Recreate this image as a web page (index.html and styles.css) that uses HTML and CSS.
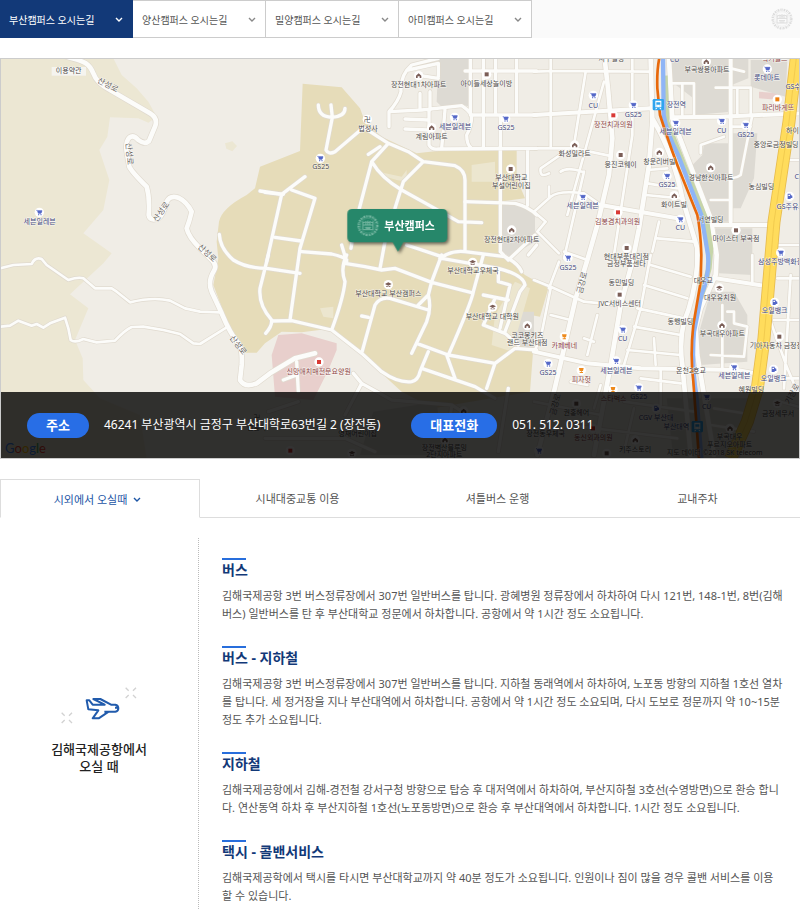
FILE: index.html
```html
<!DOCTYPE html>
<html lang="ko">
<head>
<meta charset="utf-8">
<meta name="viewport" content="width=device-width, initial-scale=1">
<title>부산캠퍼스 오시는길</title>
<link rel="stylesheet" href="styles.css">
</head>
<body>
<header class="topbar">
  <nav class="campus-nav">
    <a class="campus active" href="#">부산캠퍼스 오시는길 <svg class="chev" viewBox="0 0 8 6"><path d="M1 1l3 3 3-3"/></svg></a>
    <a class="campus" href="#">양산캠퍼스 오시는길 <svg class="chev" viewBox="0 0 8 6"><path d="M1 1l3 3 3-3"/></svg></a>
    <a class="campus" href="#">밀양캠퍼스 오시는길 <svg class="chev" viewBox="0 0 8 6"><path d="M1 1l3 3 3-3"/></svg></a>
    <a class="campus" href="#">아미캠퍼스 오시는길 <svg class="chev" viewBox="0 0 8 6"><path d="M1 1l3 3 3-3"/></svg></a>
  </nav>
  <svg class="emblem" viewBox="0 0 66 66"><use href="#seal"/></svg>
</header>

<main>
<section class="map">
<svg class="map-canvas" viewBox="3 12 2394 1197" preserveAspectRatio="xMidYMid slice">
<defs>
  <g id="seal" fill="none" stroke="currentColor">
    <circle cx="33" cy="33" r="28" stroke-width="7" stroke-dasharray="4 2 2 2 5 3"/>
    <circle cx="33" cy="33" r="22" stroke-width="1"/>
    <path stroke-width="3" d="M18 20v25h30V20M18 25l9-4 6 4 6-4 9 4M18 31h30M24 38h18M26 42h14M33 18v13M27 21v10M39 21v10"/>
  </g>
  <g id="cart"><circle r="14" fill="#fff"/><path d="M-9-6h3l3 9h8l3-8H-4M-4-3H7M-3 0H6" fill="#5568c8" stroke="#5568c8" stroke-width="2"/><circle cx="-2" cy="7" r="2" fill="#5568c8"/><circle cx="5" cy="7" r="2" fill="#5568c8"/></g>
  <g id="home"><circle r="14" fill="#fff"/><path d="M-8 0l8-7 8 7v7H3V2h-6v5h-5z" fill="#7b5e57"/></g>
  <g id="sq"><circle r="14" fill="#fff"/><path d="M-6-6H6V6H-6z" fill="#7b5e57"/></g>
  <g id="red"><circle r="14" fill="#fff"/><path d="M-6-6H6V6H-6z" fill="#d93a36"/></g>
  <g id="school"><circle r="14" fill="#fff"/><path d="M-10-2l10-5 10 5-10 5zM-6 3v4H6V3L0 6z" fill="#7b5e57"/></g>
  <g id="food"><circle r="14" fill="#fff"/><path d="M-7-7H7L5 2H1v3h4v3H-5V5h4V2h-4z" fill="#ee8a1c"/></g>
  <g id="gas"><circle r="14" fill="#fff"/><path d="M-6-8H3V8H-6zM3-4l5 2v7H3M-4-5v4H1v-4z" fill="#5568c8" fill-rule="evenodd"/></g>
  <g id="train"><rect x="-17" y="-17" width="34" height="34" rx="4" fill="#2fa4ee"/><path fill="#fff" fill-rule="evenodd" d="M-9-12H9V8H-9zM-6-7H6v7H-6zM-6 3v2h3V3zM3 3v2h3V3zM-7 10h4l-3 4h-4zM7 10H3l3 4h4z"/></g>
  <g id="roads">
    <g>
      <path class="r14" d="M200 5C250 20 265 20 280 55Q290 85 330 105L450 175Q475 190 465 215L447 258Q435 270 415 255Q400 238 388 248Q376 260 380 290L388 335Q395 350 440 395Q450 430 446 480Q450 500 475 490Q490 480 500 440Q510 420 535 428Q560 440 575 470Q568 500 560 520Q565 545 600 580L635 615Q652 630 642 647Q622 680 635 710L665 775Q690 835 715 865Q728 885 725 930L720 975Q735 1000 770 985L810 955L885 910L945 895"/>
      <path class="r8" d="M0 640L40 630 95 627Q105 605 125 612L140 630 205 675Q235 665 250 670L285 700 335 700 350 710 390 742Q460 725 510 737L555 760 600 770 660 772"/>
      <path class="r8" d="M0 815L30 812 55 797 95 812 110 807 130 818 150 805 195 788 205 820 212 855Q225 865 250 852L290 862 345 857Q375 825 395 816L430 815 490 825 540 837 580 865 600 867 680 817"/>
      <path class="r10" d="M780 408L850 418M658 538Q660 580 700 615Q740 640 800 640L900 655M805 600L780 700Q775 750 815 795M797 835Q815 815 815 798"/>
    </g>
    <g transform="translate(795 0)">
      <path class="r10" d="M160 150Q160 185 200 187Q240 185 240 160M198 150L202 187 183 285Q190 300 210 290L290 222M300 220L370 265 430 290 475 320 570 332Q600 345 600 375V585M370 265L320 320 270 510 258 580M320 320Q350 370 410 405L500 455 580 500 650 503M475 320L415 380 390 460M310 298L345 275M0 412L50 418 120 365M80 405L150 430 105 580 75 795M50 418L5 620M30 547L108 558M110 590L200 597Q235 605 245 615M230 570L245 620M360 560L345 640M425 570L530 605M525 610Q560 585 600 590L720 605Q760 625 770 650"/>
      <path class="r10" d="M372 215L372 170Q400 140 408 110Q405 60 440 30L520 10M430 45L520 25M455 60L520 70M520 25V65M372 170L470 165 590 152Q610 165 620 180L815 180M465 115V165M495 110V165M540 165L530 280M420 192L490 195M420 222L490 225M492 165V270Q500 285 520 282L815 280M620 180Q620 215 605 240Q605 270 620 280M616 12V180M655 12V280M692 12V180M706 180V590M755 12V180M788 285V450M600 48H815M600 440L750 445Q790 455 815 480M706 590L730 615 810 540M790 600L815 570"/>
      <path class="r10" d="M245 600Q225 640 240 680Q235 730 200 825M20 798L80 797 200 825 290 895 350 950Q400 985 440 980Q460 975 465 950L490 890M240 625L300 635 350 645 390 640 500 682 620 713M530 600L500 680 490 720Q500 760 485 800L440 895M290 895L330 750Q345 725 375 730L490 765M290 783L310 787M490 720L460 750M455 865L550 900 690 925 750 880 815 885M545 900L570 970M470 940L630 995 690 1030M690 925L665 1000M655 600L625 710Q620 740 550 900M530 610L700 640Q775 660 780 690L765 710 720 830M655 720L730 735M690 730L655 810 720 835 760 870M700 640V680L735 690 705 820M265 955L290 985 380 1035 560 1050 640 1100M290 985L240 1080M95 920L100 1010M55 975L95 960M10 1070L100 1040M560 1050L545 1180M730 1000L700 1190M0 1150H240L330 1190"/>
    </g>
    <g transform="translate(1602 0)">
      <path class="r14" d="M212 12L222 100 235 250 225 360 190 510 160 615 125 730 60 1010 10 1200M350 12L355 200 345 330 315 520 295 620 260 750 230 930 180 1200M405 12L415 190 530 490 548 600 545 660 500 760 485 820 490 900 540 1200M355 190Q420 300 445 430L490 580V630Q480 730 450 800Q435 860 445 930L470 1200"/>
      <path class="r12" d="M200 450L430 490M415 187L560 185 800 175M540 510H700M0 890L160 925 320 940 610 945 690 960M545 670L690 692M590 12V500M0 180L350 160"/>
      <path class="r8" d="M0 50L60 48 350 50M0 280H120L225 302M0 470L50 425Q75 405 150 415L200 450M0 470L35 500 10 530 75 595M80 350Q100 335 145 350M45 355Q15 370 20 340L100 285M50 12V280M155 50L120 270M210 80L100 480M150 350L90 610M295 12V240L240 600M545 98H650V180M655 180L620 360Q600 375 580 365M590 215H650M500 295V270L570 245M530 435H590M415 85H480V180M445 85V180M340 345L400 340M340 385L430 400M335 420L440 430M370 550L480 560M375 500L355 590M590 40L630 50M765 315H810M735 570H810M610 98V180M90 590L160 615M45 395V430"/>
      <path class="r8" d="M0 675L50 695 150 740 250 750M50 700L20 850 0 890M50 780L110 795M75 620L45 700M330 690L460 730M350 630L470 665M310 760L450 790M300 815L440 840M280 885L440 900M350 600L320 760 270 930M360 850L365 930M320 970L440 985M655 680L655 600M710 800L760 940 790 1010M730 670H810M720 795H810M530 900L630 905 640 815 600 805V770H580M565 750V940M770 660L750 1000M700 970H810M540 1060L660 1080M270 1040L480 1070M0 1040L200 1080M160 900L190 780M150 850L180 860M110 980L160 990M380 940V1050M300 1060L270 1190M100 1110L430 1150M740 1040L810 1060M530 1110L660 1130M200 990L180 1060"/>
    </g>
  </g>
</defs>

<rect x="0" y="0" width="2400" height="1220" fill="#f0ede6"/>
<path fill="#ece7d3" d="M0 0H335L365 60 410 100 445 140 470 185 445 203 415 190 330 187 322 245 298 285 328 375 310 465 250 535 335 595 310 625 210 718 265 760 225 855 248 910 250 975 300 1030 420 1080 440 1210H0zM675 265l22-6 14 14-14 16-18-8z"/>
<path fill="#e6dcb9" d="M908 86L1025 97 1080 160 1095 200 1145 245 1250 295 1385 280 1550 285V370L1575 430 1500 440V590L1575 660 1645 700 1620 785 1540 770V840L1600 880 1590 1010 1300 1060 1205 1010 1085 900 1000 820 905 832 845 830 795 865 770 893H735L690 820 655 730 640 690 655 610 650 560 657 500Q665 460 740 420L765 400 780 335 900 288z"/>
<path fill="#e8cfcc" d="M835 840L905 835 1010 865V885L985 945 960 995 940 1035 825 1025 815 900zM2277 110l60 5v20l-60-5z"/>
<g fill="#dddad3">
  <path d="M1315 12h90l5 143-20-5-55 15-25-25zM1505 450h70l30 20v90l-75 45-25-15zM1540 770h62v110l-60-10z"/>
  <path d="M2015 12h230v58l-50 20v80l-115 10v-50l-65-50zM2057 350l50-50 5-35h75v235h-75l-45-100zM2192 235h80l-10 135-40 90h-30zM2252 15h110l-5 110-105-30zM2147 520h110v140l-100-5zM2132 710h70l40 70v140l-140 10-10-80zM2000 1030h250l-30 180h-200zM1120 1070l190-30 20 160h-250z"/>
</g>
<g fill="#ece6cf"><path d="M1485 780l60-100 45 20-55 190-60-20zM1135 350l70 15 15-20v35l-30-5-50-15zM960 760l40-5v35l-30-5zM1415 330l70-10v60h-70z"/></g>
<use href="#roads" class="casing"/>
<use href="#roads" class="surface"/>

<g fill="none" stroke-linejoin="round" transform="translate(1602 0)">
  <path stroke="#c6d5a9" stroke-width="16" d="M393 62L398 200Q450 330 518 500L530 580 525 640 500 730"/>
  <path stroke="#8fb5f6" stroke-width="13" d="M387 0L389 180Q397 230 432 300L502 480 522 600Q527 660 502 720L480 830Q472 930 487 1020L502 1210"/>
  <path stroke="#e8690b" stroke-width="8" d="M378 0Q368 40 370 100L378 180Q400 250 430 330L490 480Q500 530 502 600L500 680 478 810Q468 900 478 980L495 1210"/>
  <path stroke="#e6bb4e" stroke-width="39" d="M788 0L765 200 720 500 690 850 670 1000 640 1100 590 1210"/>
  <path stroke="#ffdc5c" stroke-width="34" d="M788 0L765 200 720 500 690 850 670 1000 640 1100 590 1210"/>
  <path stroke="#ecc248" stroke-width="2" d="M788 0L765 200 720 500 690 850 670 1000 640 1100 590 1210"/>
</g>
<rect x="155" y="36" width="103" height="26" fill="#f5f4ef"/>

<g class="label">
  <text x="206" y="55">이용약관</text>
  <use href="#cart" x="118" y="472"/><text class="shop" x="119" y="506">세븐일레븐</text>
  <g class="street">
    <text transform="translate(320 97) rotate(27)">산성로</text>
    <text transform="translate(380 297) rotate(85)">산성로</text>
    <text transform="translate(490 475) rotate(-55)">산성로</text>
    <text transform="translate(616 600) rotate(43)">산성로</text>
    <text transform="translate(708 875) rotate(52)">산성로</text>
    <text transform="translate(1754 685) rotate(-76)">금강로</text>
    <text transform="translate(1674 1050) rotate(-76)">금강로</text>
    <text transform="translate(2384 1020) rotate(-62)">기장로</text>
  </g>
</g>
<g class="label" transform="translate(795 0)">
  <use href="#home" x="461" y="62"/><text x="461" y="96">장전현대1차아파트</text>
  <use href="#sq" x="665" y="58"/><text x="664" y="92">아이들세상놀이방</text>
  <circle cx="307" cy="193" r="14" fill="#fff"/><text x="307" y="200">卍</text><text x="309" y="227">법성사</text>
  <use href="#cart" x="569" y="187"/><text class="shop" x="570" y="221">세븐일레븐</text>
  <use href="#home" x="500" y="218"/><text x="500" y="252">계림아파트</text>
  <use href="#cart" x="722" y="191"/><text class="shop" x="723" y="224">GS25</text>
  <use href="#cart" x="166" y="310"/><text x="167" y="342">GS25</text>
  <use href="#sq" x="737" y="342"/><text x="739" y="376">부산대학교</text><text x="739" y="399">부설어린이집</text>
  <use href="#home" x="740" y="525"/><text x="740" y="560">장전현대2차아파트</text>
  <use href="#school" x="623" y="622"/><text x="624" y="654">부산대학교우체국</text>
  <use href="#school" x="370" y="689"/><text x="370" y="724">부산대학교 부산캠퍼스</text>
  <use href="#school" x="683" y="756"/><text x="682" y="791">부산대학교 대학원</text>
  <use href="#home" x="787" y="812"/><text x="787" y="848">코코몽키즈</text><text x="787" y="871">랜드 부산대점</text>
  <use href="#red" x="162" y="921"/><text class="med" x="161" y="957">신망애치매전문요양원</text>
  <text x="-25" y="1095">卍</text><text x="-25" y="1125">법륜사</text>
  <use href="#school" x="175" y="1100"/><text x="278" y="1142">영재어린이집</text>
  <use href="#home" x="596" y="1068"/><use href="#home" x="540" y="1155"/><text x="538" y="1184">장전벽산블루밍</text><text x="538" y="1205">2단지아파트</text>
  <use href="#red" x="76" y="1187"/><use href="#school" x="261" y="1195"/>
</g>
<g class="label" transform="translate(1602 0)">
  <text x="232" y="18">지구빌딩</text><text class="shop" x="422" y="20">CU</text>
  <use href="#home" x="517" y="20"/><text x="519" y="52">부곡쌍용아파트</text>
  <text class="med" x="722" y="18">럭키골드</text>
  <use href="#cart" x="700" y="42"/><text class="shop" x="699" y="76">롯데마트</text>
  <text class="shop" x="787" y="103">GS수퍼</text>
  <use href="#cart" x="178" y="121"/><text class="shop" x="178" y="158">CU</text>
  <use href="#cart" x="298" y="150"/><text class="shop" x="298" y="185">GS25</text>
  <use href="#red" x="238" y="181"/><text class="med" x="238" y="215">장전치과의원</text>
  <use href="#train" x="373" y="149"/><text class="shop" x="427" y="156">장전역</text>
  <use href="#cart" x="425" y="204"/><text class="shop" x="425" y="238">세븐일레븐</text>
  <circle cx="730" cy="133" r="14" fill="#fff"/><path d="M724 127h12v12h-12z" fill="#ee8010"/><text class="med" x="732" y="166">파리바게뜨</text>
  <use href="#cart" x="563" y="198"/><text class="shop" x="563" y="233">CU</text>
  <use href="#cart" x="635" y="210"/><text class="shop" x="635" y="245">GS25</text>
  <text x="795" y="234">하이마트</text><text x="726" y="276">중앙로금정빌딩</text>
  <use href="#home" x="122" y="270"/><text x="122" y="303">화성밀라트</text>
  <use href="#sq" x="260" y="300"/><text x="260" y="336">웅진코웨이</text>
  <use href="#home" x="376" y="292"/><text x="376" y="326">창운리버빌</text>
  <use href="#home" x="530" y="338"/><text x="531" y="374">경남한신아파트</text>
  <use href="#cart" x="399" y="363"/><text class="shop" x="399" y="397">GS25</text>
  <text x="682" y="401">농심빌딩</text><text class="shop" x="796" y="371">CU</text>
  <use href="#home" x="421" y="422"/><text x="420" y="455">화이트빌</text>
  <use href="#cart" x="146" y="426"/><text class="shop" x="146" y="459">세븐일레븐</text>
  <use href="#red" x="252" y="472"/><text class="med" x="251" y="506">김봉겸치과의원</text>
  <use href="#gas" x="767" y="424"/><text class="shop" x="770" y="461">GS주유소</text>
  <use href="#cart" x="439" y="493"/><text class="shop" x="439" y="525">CU</text>
  <text x="530" y="500">서연빌딩</text>
  <use href="#sq" x="606" y="526"/><text x="606" y="559">마이스터 부곡점</text>
  <use href="#sq" x="278" y="579"/><text x="277" y="611">현대부품대리점</text><text x="277" y="634">금정부품센타</text>
  <use href="#cart" x="102" y="608"/><text class="shop" x="102" y="644">GS25</text>
  <use href="#cart" x="740" y="593"/><text class="shop" x="740" y="627">삼성주방백화점</text>
  <text x="262" y="691">동민빌딩</text><text x="508" y="684">대우교</text>
  <use href="#sq" x="257" y="719"/><text x="257" y="753">JVC서비스센터</text>
  <use href="#school" x="556" y="699"/><text x="558" y="734">대우유치원</text>
  <use href="#gas" x="722" y="742"/><text class="shop" x="722" y="775">오일뱅크</text>
  <text x="439" y="806">동행빌딩</text>
  <use href="#home" x="564" y="811"/><text x="565" y="844">부곡대우아파트</text>
  <use href="#cart" x="266" y="824"/><text class="shop" x="266" y="857">CU</text>
  <use href="#food" x="91" y="845"/><text class="med" x="91" y="880">카페베네</text>
  <use href="#sq" x="736" y="845"/><text x="727" y="880">기아자동차 금정점</text>
  <use href="#cart" x="246" y="918"/><text class="shop" x="247" y="953">세븐일레븐</text>
  <text x="471" y="953">온천2호교</text>
  <use href="#cart" x="42" y="926"/><text class="shop" x="42" y="959">GS25</text>
  <use href="#food" x="142" y="946"/><text class="med" x="142" y="980">피자헛</text>
  <use href="#cart" x="600" y="937"/><text class="shop" x="601" y="970">세븐일레븐</text>
  <use href="#gas" x="719" y="943"/><text class="shop" x="719" y="978">오일뱅크</text>
  <text x="652" y="1011">혜원빌딩</text>
  <use href="#food" x="237" y="1003"/><text class="med" x="239" y="1038">스타벅스</text>
  <use href="#cart" x="314" y="998"/><text class="shop" x="314" y="1033">GS25</text>
  <use href="#sq" x="127" y="1046"/><text x="127" y="1081">권홍헤어</text>
  <use href="#gas" x="367" y="1060"/><text class="shop" x="366" y="1094">CGV 부산대</text>
  <use href="#cart" x="518" y="1026"/><text class="shop" x="518" y="1061">CU</text>
  <use href="#school" x="730" y="1045"/><text x="732" y="1083">금정세무서</text>
  <use href="#train" x="490" y="1115"/><text class="shop" x="427" y="1121">부산대역</text>
  <use href="#red" x="177" y="1120"/><text class="med" x="178" y="1154">동신외과의원</text>
  <text x="35" y="1142">장전동우체국</text>
  <use href="#home" x="304" y="1155"/><text x="303" y="1190">키주스토리</text>
  <use href="#home" x="588" y="1120"/><text x="587" y="1152">부곡대우</text><text x="587" y="1175">푸르지오아파트</text>
  <text x="542" y="1201">지도 데이터 ©2018 SK telecom</text>
  <use href="#cart" x="15" y="1187"/><use href="#sq" x="218" y="1195"/>
</g>
<text class="google" x="15" y="1193"><tspan fill="#4285f4">G</tspan><tspan fill="#ea4335">o</tspan><tspan fill="#fbbc05">o</tspan><tspan fill="#4285f4">g</tspan><tspan fill="#34a853">l</tspan><tspan fill="#ea4335">e</tspan></text>
<g class="pin">
  <path fill="#26876a" d="M1057 462h270q15 0 15 15v70q0 15-15 15h-117l-16 28-16-28h-121q-15 0-15-15v-70q0-15 15-15z"/>
  <svg x="1071" y="479" width="66" height="66" viewBox="0 0 66 66" color="#79b9a4"><use href="#seal"/></svg>
  <text x="1229" y="524">부산캠퍼스</text>
</g>
</svg>
<dl class="contact">
  <div class="contact-item"><dt>주소</dt><dd>46241 부산광역시 금정구 부산대학로63번길 2 (장전동)</dd></div>
  <div class="contact-item"><dt>대표전화</dt><dd>051. 512. 0311</dd></div>
</dl>
</section>

<nav class="tabs">
  <a class="tab current" href="#">시외에서 오실때 <svg class="chev" viewBox="0 0 8 6"><path d="M1 1l3 3 3-3"/></svg></a>
  <a class="tab" href="#">시내대중교통 이용</a>
  <a class="tab" href="#">셔틀버스 운행</a>
  <a class="tab" href="#">교내주차</a>
</nav>

<section class="guide">
  <div class="origin">
    <svg class="plane" viewBox="0 0 228 114">
      <g fill="none" stroke="#d2d2d2" stroke-width="4"><path d="M194 2l9 9M225 2l-9 9M194 33l9-9M225 33l-9-9M2 77l9 9M33 77l-9 9M2 108l9-9M33 108l-9-9"/></g>
      <path fill="none" stroke="#215bac" stroke-width="6" stroke-linejoin="round" d="M77 40h8l10 13h36l-34-17h21l32 17h13q9 2 9 11t-9 10h-20l-30 20H95l17-24-30-3zM171 62h-9M143 74h-13"/>
    </svg>
    <h2>김해국제공항에서<br>오실 때</h2>
  </div>
  <div class="routes">
    <article class="route">
      <h3>버스</h3>
      <p>김해국제공항 3번 버스정류장에서 307번 일반버스를 탑니다. 광혜병원 정류장에서 하차하여 다시 121번, 148-1번, 8번(김해<br>버스) 일반버스를 탄 후 부산대학교 정문에서 하차합니다. 공항에서 약 1시간 정도 소요됩니다.</p>
    </article>
    <article class="route">
      <h3>버스 - 지하철</h3>
      <p>김해국제공항 3번 버스정류장에서 307번 일반버스를 탑니다. 지하철 동래역에서 하차하여, 노포동 방향의 지하철 1호선 열차<br>를 탑니다. 세 정거장을 지나 부산대역에서 하차합니다. 공항에서 약 1시간 정도 소요되며, 다시 도보로 정문까지 약 10~15분<br>정도 추가 소요됩니다.</p>
    </article>
    <article class="route">
      <h3>지하철</h3>
      <p>김해국제공항에서 김해-경전철 강서구청 방향으로 탑승 후 대저역에서 하차하여, 부산지하철 3호선(수영방면)으로 환승 합니<br>다. 연산동역 하차 후 부산지하철 1호선(노포동방면)으로 환승 후 부산대역에서 하차합니다. 1시간 정도 소요됩니다.</p>
    </article>
    <article class="route">
      <h3>택시 - 콜밴서비스</h3>
      <p>김해국제공학에서 택시를 타시면 부산대학교까지 약 40분 정도가 소요됩니다. 인원이나 짐이 많을 경우 콜밴 서비스를 이용<br>할 수 있습니다.</p>
    </article>
  </div>
</section>
</main>
</body>
</html>
```
FILE: styles.css
```css
* { box-sizing: border-box; }

body {
  margin: 0 4px 0 0;
  background: #fff;
  color: #555;
  font-family: "Noto Sans", "Noto Sans CJK KR", sans-serif;
  font-size: 11px;
  line-height: 18px;
}

a { color: inherit; text-decoration: none; }
h2, h3, p, dl, dd { margin: 0; }

.chev { width: 8px; height: 6px; flex: none; }
.chev path { fill: none; stroke: currentColor; stroke-width: 1.4; }

/* top bar */
.topbar {
  display: flex;
  align-items: center;
  justify-content: space-between;
  height: 38px;
  padding-right: 7px;
  background: #fafafa;
}
.campus-nav { display: flex; height: 100%; }
.campus {
  display: flex;
  align-items: center;
  justify-content: space-between;
  width: 133px;
  padding: 2px 9px 0;
  border: 1px solid #ccc;
  border-left: 0;
  background: #fff;
  font-size: 10px;
}
.campus .chev { color: #888; }
.campus.active { border-color: #123978; background: #123978; color: #fff; }
.campus.active .chev { color: #fff; }
.emblem { width: 22px; height: 22px; color: #dcdcdc; }

/* map */
.map {
  position: relative;
  margin-top: 20px;
  border: 1px solid #ccc;
}
.map-canvas { display: block; width: 100%; height: 399px; }
.casing, .surface { fill: none; stroke-linecap: round; stroke-linejoin: round; }
.casing { --edge: 4px; stroke: #e0dacf; }
.surface { --edge: 0px; stroke: #fcfcfa; }
.r8 { stroke-width: calc(8px + var(--edge)); }
.r10 { stroke-width: calc(10px + var(--edge)); }
.r12 { stroke-width: calc(12px + var(--edge)); }
.r14 { stroke-width: calc(14px + var(--edge)); }
.label text {
  fill: #4c4846;
  stroke: #fff;
  stroke-opacity: .7;
  stroke-width: 3px;
  paint-order: stroke;
  font-size: 21px;
  text-anchor: middle;
}
.label .shop { fill: #41477c; }
.label .med { fill: #8c4444; }
.label .street text { fill: #66625c; font-size: 24px; }
.google { font-family: Lato, sans-serif; font-size: 39px; }
.pin { filter: drop-shadow(5px 6px 4px rgba(0, 0, 0, .5)); }
.pin text { fill: #fff; font-size: 33px; font-weight: 700; text-anchor: middle; }

.contact {
  position: absolute;
  right: 0;
  bottom: 0;
  left: 0;
  display: flex;
  align-items: center;
  gap: 31px;
  height: 66px;
  padding: 0 26px;
  background: rgba(0, 0, 0, .8);
  color: #fff;
}
.contact-item { display: flex; align-items: center; gap: 15px; }
.contact dt {
  padding: 0 19px;
  border-radius: 13px;
  background: #286ee6;
  font-size: 13px;
  font-weight: 700;
  line-height: 25px;
}
.contact dd { font-size: 12px; }

/* route tabs */
.tabs {
  display: grid;
  grid-template-columns: repeat(4, 1fr);
  margin-top: 20px;
}
.tab {
  display: flex;
  align-items: center;
  justify-content: center;
  gap: 6px;
  height: 39px;
  padding: 2px 5px 0 0;
  border-bottom: 1px solid #ddd;
  color: #555;
}
.tab.current { border: 1px solid #ddd; border-bottom-color: #fff; color: #1c55a5; }

/* guide */
.guide {
  display: grid;
  grid-template-columns: 199px 1fr;
  margin-top: 20px;
}
.origin {
  display: flex;
  flex-direction: column;
  align-items: center;
  padding-top: 149px;
  border-right: 1px dotted #bbb;
}
.plane { width: 76px; height: 38px; }
.origin h2 {
  margin-top: 16px;
  color: #222;
  font-size: 13px;
  font-weight: 500;
  line-height: 17px;
  text-align: center;
}
.routes {
  display: grid;
  gap: 23px;
  padding: 20px 16px 6px 23px;
}
.route h3 {
  margin-bottom: 7px;
  color: #123978;
  font-size: 14px;
  font-weight: 700;
  line-height: 20px;
}
.route h3::before {
  content: "";
  display: block;
  width: 24px;
  height: 2px;
  background: #286edc;
}
```
